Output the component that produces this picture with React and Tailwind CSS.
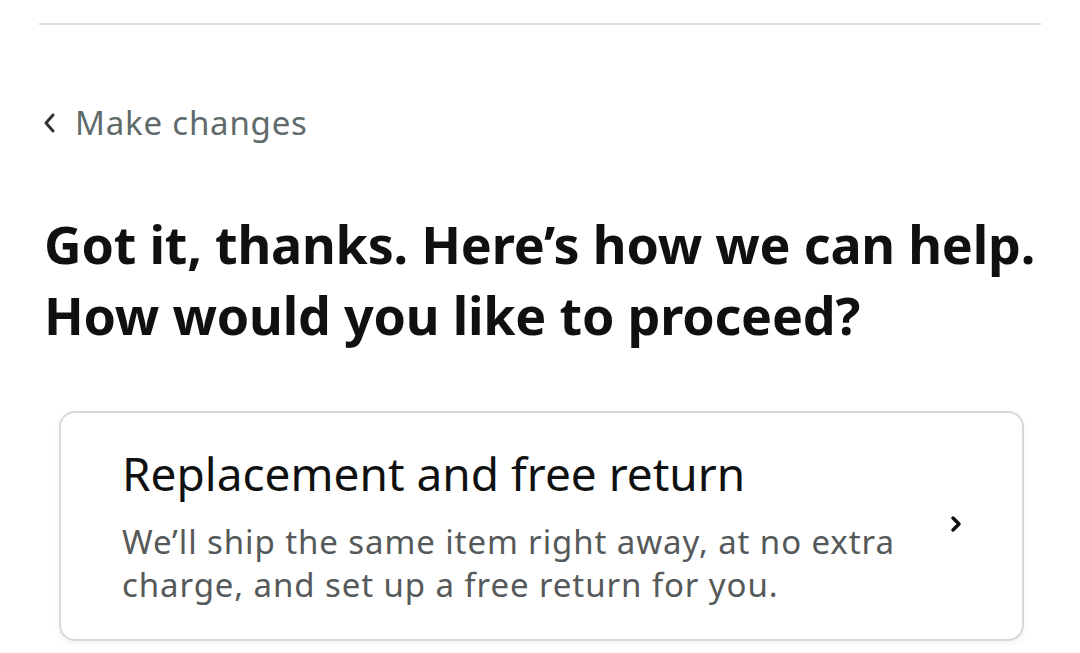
import React from "react";

export default function App() {
  return (
    <div className="w-[1080px] h-[653px] overflow-hidden bg-white font-['Noto_Sans',sans-serif]">
      <div className="pt-[23px] px-[39px]">
        <div className="h-[2px] bg-[#dddddd]" />
      </div>

      {/* Back link */}
      <div className="flex items-center mt-[77px] ml-[42px] h-[40px]">
        <svg width="16" height="24" viewBox="0 0 16 24" className="mr-[17px] mt-[2px]">
          <path d="M11 4 L4 12 L11 20" fill="none" stroke="#333" strokeWidth="3" strokeLinecap="round" strokeLinejoin="round" />
        </svg>
        <span className="text-[33px] text-[#5f6b6b] leading-none tracking-[0.8px]">Make changes</span>
      </div>

      {/* Heading */}
      <h1 className="mt-[66px] ml-[44px] text-[52px] leading-[71px] font-bold text-[#0f1111] tracking-[-0.2px]">
        Got it, thanks. Here’s how we can help.
        <br />
        How would you like to proceed?
      </h1>

      {/* Option card */}
      <div className="mt-[61px] ml-[59px] w-[965px] h-[230px] rounded-[16px] border-2 border-[#d5d9d9] shadow-[0_2px_6px_rgba(0,0,0,0.06)] flex items-center pl-[61px] pr-[60px]">
        <div className="flex-1">
          <div className="text-[46px] leading-[52px] text-[#0f1111]">Replacement and free return</div>
          <div className="mt-[21px] text-[33px] leading-[43px] text-[#565959] tracking-[0.9px] w-[800px]">
            We’ll ship the same item right away, at no extra charge, and set up a free return for you.
          </div>
        </div>
        <svg width="12" height="18" viewBox="0 0 12 18" className="mb-[4px]">
          <path d="M3 3 L9 9 L3 15" fill="none" stroke="#0f1111" strokeWidth="3.5" strokeLinecap="round" strokeLinejoin="round" />
        </svg>
      </div>
    </div>
  );
}
